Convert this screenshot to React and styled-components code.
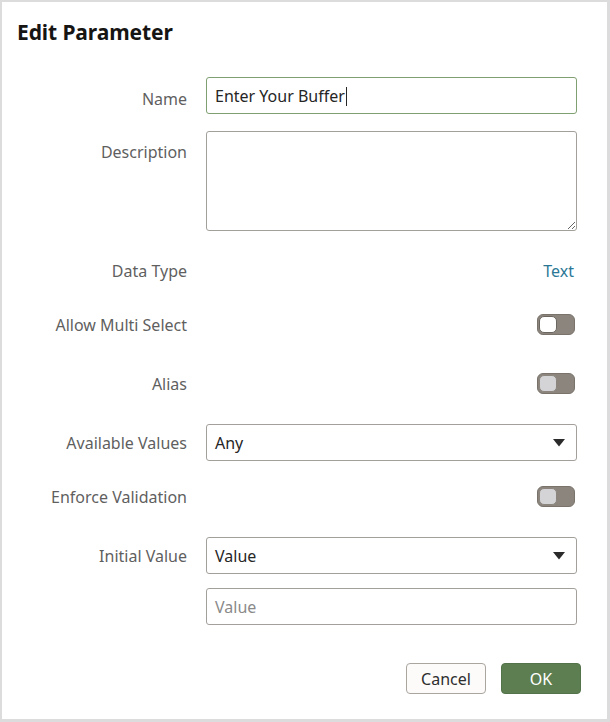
import styled, { createGlobalStyle } from 'styled-components'

const Global = createGlobalStyle`
  body {
    margin: 0;
    font-family: 'Noto Sans', 'Liberation Sans', sans-serif;
    background: #ffffff;
  }
`

const Dialog = styled.div`
  box-sizing: border-box;
  width: 610px;
  height: 722px;
  background: #ffffff;
  border: 2px solid #dcdcdc;
  border-right-width: 3px;
  border-bottom-width: 3px;
  padding: 18px 0 0 15px;
  display: flex;
  flex-direction: column;
`

const Title = styled.h1`
  margin: 0;
  font-size: 21px;
  line-height: 24px;
  font-weight: 700;
  color: #161513;
  letter-spacing: -0.1px;
`

const Row = styled.div`
  display: grid;
  grid-template-columns: 170px 371px;
  column-gap: 19px;
  align-items: ${p => (p.$top ? 'start' : 'center')};
  min-height: 37px;
  margin-top: ${p => p.$gap}px;
`

const Label = styled.div`
  text-align: right;
  font-size: 16px;
  line-height: 20px;
  color: #5f5f5f;
  padding-top: ${p => p.$shift || 0}px;
`

const Field = styled.div`
  box-sizing: border-box;
  height: 37px;
  border: 1px solid ${p => (p.$focus ? '#7fa070' : '#a3a09b')};
  border-radius: 3px;
  padding: 0 11px 0 8px;
  display: flex;
  align-items: center;
  justify-content: space-between;
  font-size: 16px;
  color: ${p => (p.$placeholder ? '#8a8a8a' : '#262626')};
  background: #ffffff;
`

const Caret = styled.span`
  display: inline-block;
  width: 1px;
  height: 19px;
  background: #262626;
  margin-left: 1px;
  vertical-align: -4px;
`

const TextArea = styled.textarea`
  box-sizing: border-box;
  width: 371px;
  height: 100px;
  border: 1px solid #a3a09b;
  border-radius: 3px;
  padding: 8px;
  font-family: inherit;
  font-size: 16px;
  margin: 0;
  display: block;
  outline: none;
`

const Value = styled.div`
  justify-self: end;
  margin-right: 3px;
  font-size: 16px;
  color: #2b7896;
`

const Track = styled.div`
  justify-self: end;
  margin-right: 2px;
  box-sizing: border-box;
  width: 38px;
  height: 21px;
  border-radius: 6px;
  background: #8b857e;
  border: 1px solid #79736c;
  padding: 1px;
`

const Knob = styled.div`
  box-sizing: border-box;
  width: 18px;
  height: 17px;
  border-radius: 5px;
  background: ${p => (p.$light ? '#ffffff' : '#d4d4d6')};
  border: 1px solid ${p => (p.$light ? '#6c6660' : '#8b857e')};
`

const Footer = styled.div`
  display: flex;
  justify-content: flex-end;
  gap: 15px;
  padding-right: 26px;
  margin-top: 38px;
`

const Button = styled.button`
  box-sizing: border-box;
  width: 80px;
  height: 31px;
  border-radius: 4px;
  font-family: inherit;
  font-size: 16px;
  border: 1px solid ${p => (p.$primary ? '#53744a' : '#aaa59f')};
  background: ${p => (p.$primary ? '#5d7e51' : '#fcfbfa')};
  color: ${p => (p.$primary ? '#ffffff' : '#2e2e2e')};
  padding: 0;
  cursor: pointer;
`

const Arrow = () => (
  <svg width="12" height="8" viewBox="0 0 12 8">
    <path d="M0 0 H12 L6 7.5 Z" fill="#2b2b2b" />
  </svg>
)

const Toggle = ({ light }) => (
  <Track>
    <Knob $light={light} />
  </Track>
)

export default function App() {
  return (
    <>
      <Global />
      <Dialog>
        <Title>Edit Parameter</Title>

        <Row $gap={33}>
          <Label $shift={6}>Name</Label>
          <Field $focus>
            <span>Enter Your Buffer<Caret /></span>
          </Field>
        </Row>

        <Row $gap={17} $top>
          <Label $shift={11}>Description</Label>
          <TextArea />
        </Row>

        <Row $gap={21}>
          <Label>Data Type</Label>
          <Value>Text</Value>
        </Row>

        <Row $gap={17}>
          <Label>Allow Multi Select</Label>
          <Toggle light />
        </Row>

        <Row $gap={22}>
          <Label>Alias</Label>
          <Toggle />
        </Row>

        <Row $gap={22}>
          <Label>Available Values</Label>
          <Field>
            <span>Any</span>
            <Arrow />
          </Field>
        </Row>

        <Row $gap={17}>
          <Label>Enforce Validation</Label>
          <Toggle />
        </Row>

        <Row $gap={22}>
          <Label>Initial Value</Label>
          <Field>
            <span>Value</span>
            <Arrow />
          </Field>
        </Row>

        <Row $gap={14}>
          <span />
          <Field $placeholder>
            <span>Value</span>
          </Field>
        </Row>

        <Footer>
          <Button>Cancel</Button>
          <Button $primary>OK</Button>
        </Footer>
      </Dialog>
    </>
  )
}
